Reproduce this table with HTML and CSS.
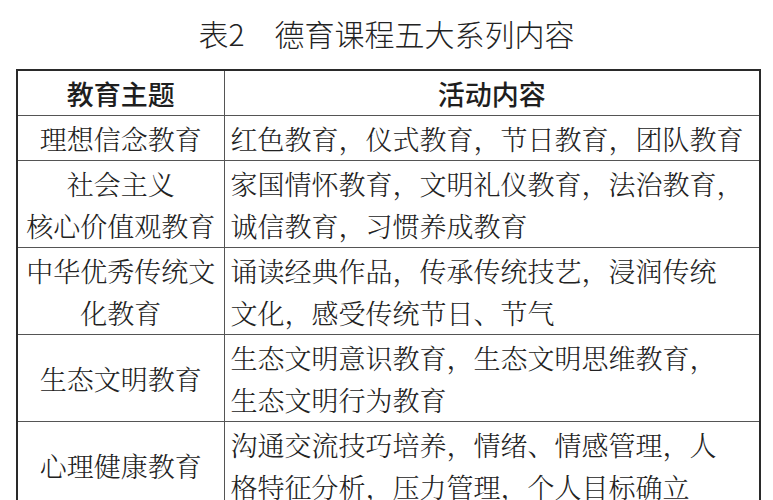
FILE: index.html
```html
<!DOCTYPE html>
<html lang="zh-CN">
<head>
<meta charset="utf-8">
<title>表2 德育课程五大系列内容</title>
<link rel="stylesheet" href="styles.css">
</head>
<body>
<div class="page">
  <h1 class="title">表2　德育课程五大系列内容</h1>
  <table class="course">
    <colgroup>
      <col class="col-theme">
      <col class="col-content">
    </colgroup>
    <thead>
      <tr>
        <th>教育主题</th>
        <th>活动内容</th>
      </tr>
    </thead>
    <tbody>
      <tr>
        <td class="theme">理想信念教育</td>
        <td class="content">红色教育，仪式教育，节日教育，团队教育</td>
      </tr>
      <tr>
        <td class="theme">社会主义<br>核心价值观教育</td>
        <td class="content">家国情怀教育，文明礼仪教育，法治教育，<br>诚信教育，习惯养成教育</td>
      </tr>
      <tr>
        <td class="theme">中华优秀传统文<br>化教育</td>
        <td class="content">诵读经典作品，传承传统技艺，浸润传统<br>文化，感受传统节日、节气</td>
      </tr>
      <tr>
        <td class="theme">生态文明教育</td>
        <td class="content">生态文明意识教育，生态文明思维教育，<br>生态文明行为教育</td>
      </tr>
      <tr>
        <td class="theme">心理健康教育</td>
        <td class="content">沟通交流技巧培养，情绪、情感管理，人<br>格特征分析，压力管理，个人目标确立</td>
      </tr>
    </tbody>
  </table>
</div>
</body>
</html>
```

FILE: styles.css
```css
html, body {
  margin: 0;
  padding: 0;
  background: #ffffff;
}

.page {
  width: 773px;
  padding-top: 17px;
}

.title {
  margin: 0;
  text-align: center;
  font-family: "Noto Sans CJK SC", "Noto Sans", sans-serif;
  font-weight: 300;
  font-size: 30px;
  line-height: 32px;
  color: #222222;
}

.course {
  margin: 20px 0 0 16px;
  width: 743px;
  border-collapse: collapse;
  table-layout: fixed;
  border: 2px solid #2a2a2a;
  color: #222222;
}

.col-theme {
  width: 207px;
}

.col-content {
  width: 536px;
}

.course th,
.course td {
  border: 1px solid #555555;
  padding: 2px 6px 0 6px;
  line-height: 42px;
  font-size: 27px;
  vertical-align: middle;
}

.course th {
  font-family: "Noto Sans CJK SC", "Noto Sans", sans-serif;
  font-weight: 500;
  text-align: center;
  color: #1e1e1e;
}

.course td {
  font-family: "Noto Serif CJK SC", "Source Han Serif SC", "AR PL UMing CN", "Noto Sans CJK SC", serif;
  font-weight: 300;
}

.theme {
  text-align: center;
  padding-left: 2px;
  padding-right: 2px;
}

.content {
  text-align: left;
  white-space: nowrap;
}
```
